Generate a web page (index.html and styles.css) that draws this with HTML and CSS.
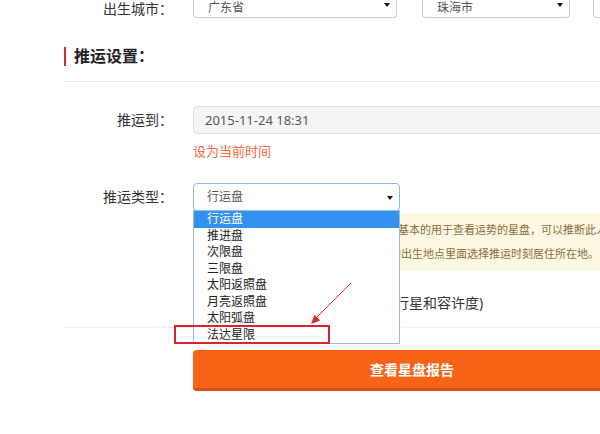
FILE: index.html
```html
<!DOCTYPE html>
<html lang="zh-CN">
<head>
	<meta charset="UTF-8">
	<title>推运设置</title>
	<link rel="stylesheet" href="styles.css">
</head>
<body>
	<div class="page">
		<div class="row row-city">
			<label class="label">出生城市：</label>
			<div class="select w207">广东省<i class="caret"></i></div>
			<div class="select w150">珠海市<i class="caret"></i></div>
			<div class="select w150"></div>
		</div>

		<h3 class="section-title"><span>推运设置：</span></h3>

		<div class="section">
			<div class="row row-time">
				<label class="label">推运到：</label>
				<div class="field">
					<div class="input">2015-11-24 18:31</div>
					<a class="link">设为当前时间</a>
				</div>
			</div>
			<div class="row row-type">
				<label class="label">推运类型：</label>
				<div class="field">
					<div class="select-wrap">
						<div class="select focus w207">行运盘<i class="caret"></i></div>
						<ul class="dropdown">
							<li class="on">行运盘</li>
							<li>推进盘</li>
							<li>次限盘</li>
							<li>三限盘</li>
							<li>太阳返照盘</li>
							<li>月亮返照盘</li>
							<li>太阳弧盘</li>
							<li>法达星限</li>
						</ul>
					</div>
					<div class="tip">
						<p class="first">行运盘：以出生时刻为基础的，也是最基本的用于查看运势的星盘，可以推断此人某段时间内的运势变化。</p>
						<p>注意：使用行运盘时，请在上面表单的出生地点里面选择推运时刻居住所在地。</p>
					</div>
					<div class="opt">启用高级选项与相位设置（显示行星和容许度)</div>
				</div>
			</div>
		</div>

		<div class="actions">
			<button class="btn-submit">查看星盘报告</button>
		</div>
	</div>

	<!-- 标注 -->
	<div class="mark-box"></div>
	<svg class="mark-arrow" width="60" height="50" viewBox="0 0 60 50">
		<line x1="51" y1="5" x2="16" y2="40" stroke="#e0282e" stroke-width="1"/>
		<polygon points="11,46 20.2,42.4 14.6,36.8" fill="#e0282e"/>
	</svg>
</body>
</html>
```

FILE: styles.css
```css
body{
	margin:0;
	overflow:hidden;
	background:#fff;
	color:#333;
	font-family:"Noto Sans","Noto Sans CJK SC",sans-serif;
	font-size:14px;
}
ul,li,p{margin:0;padding:0;list-style:none;}

.page{margin-top:-4px;padding-left:64px;width:700px;}
.row{display:flex;align-items:flex-start;}
.label{width:109px;flex-shrink:0;padding-right:20px;text-align:right;line-height:28px;font-size:14px;color:#333;}
.field{width:500px;}

.select{position:relative;box-sizing:border-box;height:28px;line-height:26px;padding:0 14px;border:1px solid #ccc;border-radius:4px;font-size:12px;color:#555;background:#fff;}
.select .caret{position:absolute;right:6px;top:12px;border-left:3px solid transparent;border-right:3px solid transparent;border-top:4px solid #111;}
.w207{width:207px;margin-right:25px;}
.w150{width:150px;margin-right:23px;}
.select.focus{border-color:#8fb8e6;margin-right:0;padding-left:13px;}

.row-city .label{line-height:26px;}
.row-city .select{height:22px;line-height:23px;border-top:0;border-radius:0 0 4px 4px;}
.row-city .select .caret{top:7px;}

.section-title{margin:25px 0 0;padding-bottom:15px;border-bottom:1px solid #e6e6e6;font-size:16px;line-height:19px;}
.section-title span{display:block;border-left:2px solid #d9272e;padding-left:8px;color:#222;}

.section{padding-bottom:14px;border-bottom:1px solid #eee;}
.row-time{margin-top:24px;}
.input{box-sizing:border-box;width:450px;height:28px;line-height:26px;padding-left:11px;border:1px solid #ddd;border-radius:4px;background:#f5f5f5;font-size:13px;color:#555;}
.link{display:block;margin-top:7px;line-height:20px;font-size:13px;color:#f2683a;}

.row-type{margin-top:22px;}
.select-wrap{position:relative;height:28px;z-index:2;}
.dropdown{position:absolute;left:0;top:27px;box-sizing:border-box;width:207px;border:1px solid #a3b9d9;background:#fff;}
.dropdown li{height:16.5px;line-height:16.5px;padding-left:13px;font-size:12px;color:#222;}
.dropdown li.on{background:#3391f0;color:#fff;}

.tip{margin-top:2px;width:480px;padding:5px 0 5px 21px;background:#fcf8e3;color:#8a6d3b;font-size:11px;line-height:24px;white-space:nowrap;}
.tip .first{text-indent:-3px;}
.opt{margin-top:22px;padding-left:6px;line-height:20px;font-size:14px;color:#333;white-space:nowrap;}

.actions{padding:22px 0 0 129px;}
.btn-submit{display:block;width:438px;height:41px;padding:0;border:0;border-bottom:3px solid #d5531a;border-radius:4px;background:#f96318;color:#fff;font-family:"Noto Sans","Noto Sans CJK SC",sans-serif;font-size:14px;font-weight:bold;}

.mark-box{position:absolute;left:174px;top:325px;width:156px;height:19px;box-sizing:border-box;border:2px solid #d9232e;z-index:3;}
.mark-arrow{position:absolute;left:300px;top:278px;z-index:3;}
```
